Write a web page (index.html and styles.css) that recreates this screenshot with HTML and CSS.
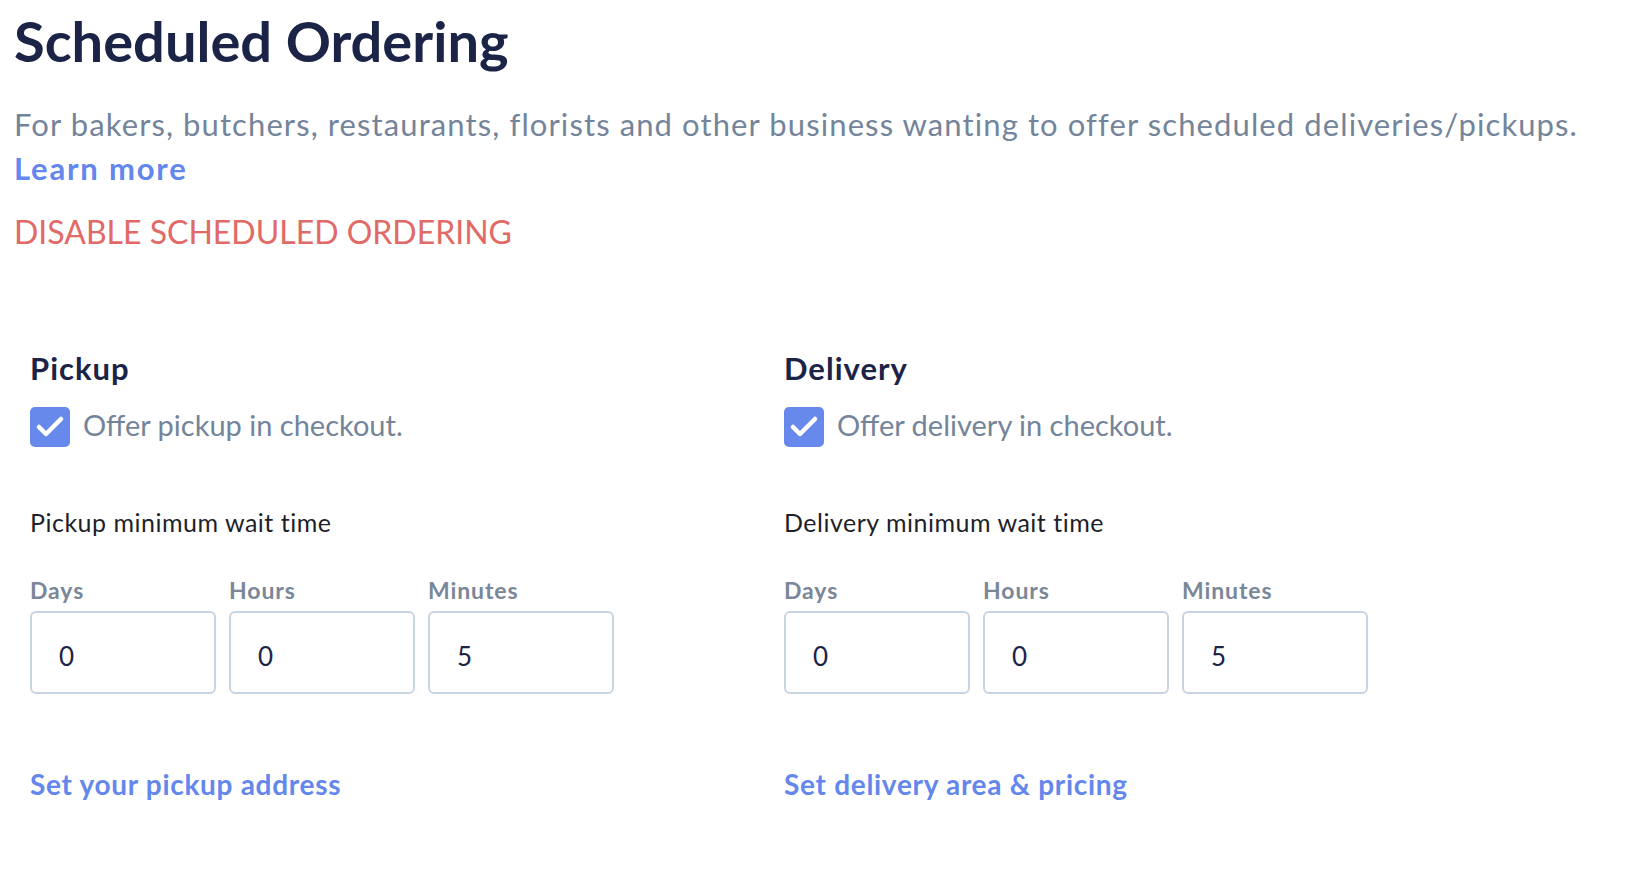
FILE: index.html
```html
<!DOCTYPE html>
<html lang="en">
<head>
    <meta charset="UTF-8">
    <meta name="viewport" content="width=device-width, initial-scale=1.0">
    <title>Scheduled Ordering</title>
    <link rel="stylesheet" href="styles.css">
</head>
<body>
    <div class="page">
        <h1 class="title">Scheduled Ordering</h1>
        <p class="intro">For bakers, butchers, restaurants, florists and other business wanting to offer scheduled deliveries/pickups.</p>
        <a class="learn-more" href="#">Learn more</a>
        <a class="disable" href="#">DISABLE SCHEDULED ORDERING</a>

        <div class="options">
            <div class="option">
                <h2>Pickup</h2>
                <label class="check-row">
                    <span class="checkbox">
                        <svg width="40" height="40" viewBox="0 0 40 40"><path d="M9 20 L16 27 L31 12" fill="none" stroke="#fff" stroke-width="4.5" stroke-linecap="round" stroke-linejoin="round"/></svg>
                    </span>
                    <span class="check-text">Offer pickup in checkout.</span>
                </label>
                <p class="wait-title">Pickup minimum wait time</p>
                <div class="wait-fields">
                    <div class="field">
                        <label>Days</label>
                        <input type="text" value="0">
                    </div>
                    <div class="field">
                        <label>Hours</label>
                        <input type="text" value="0">
                    </div>
                    <div class="field">
                        <label>Minutes</label>
                        <input type="text" value="5">
                    </div>
                </div>
                <a class="option-link" href="#">Set your pickup address</a>
            </div>

            <div class="option">
                <h2>Delivery</h2>
                <label class="check-row">
                    <span class="checkbox">
                        <svg width="40" height="40" viewBox="0 0 40 40"><path d="M9 20 L16 27 L31 12" fill="none" stroke="#fff" stroke-width="4.5" stroke-linecap="round" stroke-linejoin="round"/></svg>
                    </span>
                    <span class="check-text">Offer delivery in checkout.</span>
                </label>
                <p class="wait-title">Delivery minimum wait time</p>
                <div class="wait-fields">
                    <div class="field">
                        <label>Days</label>
                        <input type="text" value="0">
                    </div>
                    <div class="field">
                        <label>Hours</label>
                        <input type="text" value="0">
                    </div>
                    <div class="field">
                        <label>Minutes</label>
                        <input type="text" value="5">
                    </div>
                </div>
                <a class="option-link" href="#">Set delivery area &amp; pricing</a>
            </div>
        </div>
    </div>
</body>
</html>
```

FILE: styles.css
```css
body {
    margin: 0;
    font-family: Lato, "Open Sans", sans-serif;
    background-color: #fff;
}
.page {
    padding: 7px 14px 0 14px;
}
.title {
    margin: 0;
    font-size: 56px;
    line-height: 67px;
    font-weight: 700;
    color: #1b2347;
}
.intro {
    margin: 28px 0 0 0;
    font-size: 31px;
    line-height: 44px;
    letter-spacing: 1.1px;
    color: #74849a;
}
.learn-more {
    display: block;
    font-size: 31px;
    line-height: 44px;
    letter-spacing: 1.8px;
    font-weight: 700;
    color: #6387ec;
    text-decoration: none;
}
.disable {
    display: block;
    margin-top: 22px;
    font-size: 32px;
    line-height: 40px;
    color: #e16a67;
    text-decoration: none;
}
.options {
    display: grid;
    grid-template-columns: 754px 754px;
    margin: 98px 0 0 16px;
}
.option h2 {
    margin: 0;
    font-size: 31px;
    line-height: 36px;
    letter-spacing: 1px;
    font-weight: 700;
    color: #1b2347;
}
.check-row {
    display: flex;
    align-items: flex-start;
    margin-top: 21px;
}
.checkbox {
    width: 40px;
    height: 40px;
    border-radius: 5px;
    background-color: #6689eb;
    margin-right: 13px;
}
.checkbox svg {
    display: block;
}
.check-text {
    font-size: 29px;
    line-height: 36px;
    color: #74849a;
}
.wait-title {
    margin: 60px 0 0 0;
    font-size: 25px;
    line-height: 30px;
    letter-spacing: 0.5px;
    color: #1f1f2a;
}
.wait-fields {
    display: flex;
    gap: 13px;
    margin-top: 39px;
}
.field label {
    display: block;
    font-size: 23px;
    line-height: 28px;
    letter-spacing: 0.9px;
    font-weight: 700;
    color: #7a8799;
    margin-bottom: 7px;
}
.field input {
    box-sizing: border-box;
    width: 186px;
    height: 83px;
    padding: 6px 0 0 27px;
    border: 2px solid #c8d4e2;
    border-radius: 6px;
    font-family: Lato, "Open Sans", sans-serif;
    font-size: 26px;
    color: #1b2347;
    outline: none;
}
.option-link {
    display: inline-block;
    margin-top: 74px;
    font-size: 28px;
    line-height: 32px;
    letter-spacing: 0.7px;
    font-weight: 700;
    color: #6387ec;
    text-decoration: none;
}
```
